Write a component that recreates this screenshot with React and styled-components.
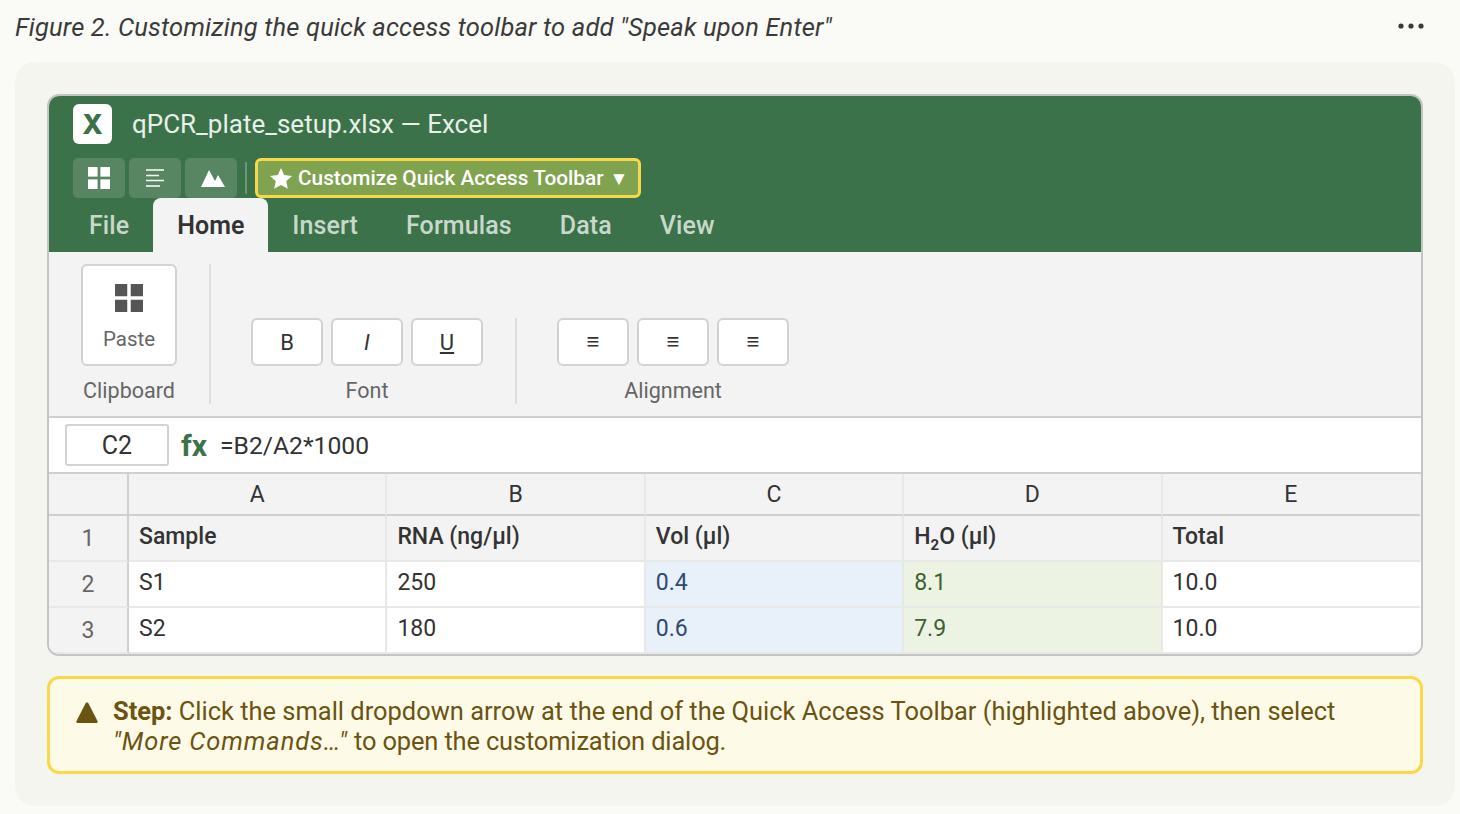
import React from "react";
import styled, { createGlobalStyle } from "styled-components";

const Global = createGlobalStyle`
  html, body {
    margin: 0;
    padding: 0;
    background: #fafaf7;
    font-family: "Roboto", "Liberation Sans", sans-serif;
    color: #333;
  }
  * { box-sizing: border-box; }
`;

const Page = styled.div`
  width: 1460px;
  height: 814px;
  overflow: hidden;
  padding: 0 5px 8px 15px;
`;

const Caption = styled.div`
  height: 62px;
  padding: 0 31px 8px 0;
  display: flex;
  align-items: center;
  justify-content: space-between;
`;

const CaptionText = styled.span`
  font-size: 25.5px;
  letter-spacing: 0.16px;
  font-style: italic;
  color: #3a3a3a;
`;

const MoreDots = styled.svg`
  width: 26px;
  height: 6px;
  margin-bottom: 2px;
  fill: #3a3a3a;
  display: block;
`;

const Card = styled.div`
  height: 744px;
  background: #f5f5f0;
  border-radius: 20px;
  padding: 32px;
  display: flex;
  flex-direction: column;
  gap: 20px;
`;

const Excel = styled.div`
  height: 562px;
  border: 2px solid #c4c4c2;
  border-radius: 12px;
  overflow: hidden;
  background: #fff;
`;

const Header = styled.div`
  height: 156px;
  background: #3c7249;
  padding: 8px 24px 0;
  display: flex;
  flex-direction: column;
`;

const TitleRow = styled.div`
  height: 40px;
  display: flex;
  align-items: center;
  gap: 20px;
`;

const Logo = styled.div`
  width: 39px;
  height: 40px;
  background: #fff;
  border-radius: 6px;
  display: flex;
  align-items: center;
  justify-content: center;
  color: #3c7249;
  font-family: "Inter", sans-serif;
  font-weight: 800;
  font-size: 27px;
`;

const Title = styled.span`
  color: #e9efe9;
  font-size: 26px;
`;

const QuickBar = styled.div`
  margin-top: 14px;
  height: 40px;
  display: flex;
  align-items: center;
  gap: 4px;
`;

const QuickButton = styled.div`
  width: 52px;
  height: 40px;
  border-radius: 5px;
  background: #598662;
  display: flex;
  align-items: center;
  justify-content: center;
`;

const MountainIcon = styled.svg`
  width: 24px;
  height: 17px;
  margin-left: 4px;
  fill: #fff;
`;

const QuickDivider = styled.div`
  width: 2px;
  height: 32px;
  margin: 0 4px 0 4px;
  background: #6d9878;
`;

const Highlight = styled.div`
  width: 386px;
  height: 40px;
  border: 3px solid #f7d84a;
  border-radius: 6px;
  background: #7fa34f;
  color: #fff;
  font-size: 20.8px;
  font-weight: 500;
  white-space: nowrap;
  display: flex;
  align-items: center;
  padding: 0 11px 0 12px;
  gap: 6px;
`;

const StarIcon = styled.svg`
  width: 22px;
  height: 21px;
  flex: none;
  fill: #fff;
`;

const Caret = styled.span`
  margin-left: auto;
  font-size: 19px;
`;

const Tabs = styled.div`
  margin-left: -8px;
  display: flex;
  height: 54px;
`;

const Tab = styled.div`
  padding: 0 24px;
  display: flex;
  align-items: center;
  font-size: 25px;
  letter-spacing: ${(p) => (p.$active ? "0" : "0.1px")};
  font-weight: ${(p) => (p.$active ? 600 : 500)};
  color: ${(p) => (p.$active ? "#333" : "#c9d8cc")};
  background: ${(p) => (p.$active ? "#f3f3f3" : "transparent")};
  border-radius: ${(p) => (p.$active ? "8px 8px 0 0" : "0")};
`;

const Ribbon = styled.div`
  height: 166px;
  background: #f3f3f3;
  border-bottom: 2px solid #cfcfcf;
  padding: 12px 0 12px 32px;
  display: flex;
  align-items: flex-end;
`;

const Group = styled.div`
  display: flex;
  flex-direction: column;
  align-items: center;
  gap: 12px;
`;

const GroupRow = styled.div`
  display: flex;
  gap: 8px;
`;

const GroupLabel = styled.div`
  height: 26px;
  line-height: 26px;
  font-size: 21.5px;
  color: #666;
`;

const Divider = styled.div`
  width: 2px;
  height: ${(p) => p.$height}px;
  background: #dedede;
  margin: 0 ${(p) => p.$right}px 0 ${(p) => p.$left}px;
`;

const PasteButton = styled.div`
  width: 96px;
  height: 102px;
  background: #fff;
  border: 2px solid #d2d2d2;
  border-radius: 6px;
  display: flex;
  flex-direction: column;
  align-items: center;
  padding-top: 18px;
  gap: 15px;
  font-size: 20.5px;
  color: #666;
`;

const FormatButton = styled.div`
  width: 72px;
  height: 48px;
  background: #fff;
  border: 2px solid #d2d2d2;
  border-radius: 6px;
  display: flex;
  align-items: center;
  justify-content: center;
  font-size: 22px;
  color: #333;
  font-style: ${(p) => (p.$italic ? "italic" : "normal")};
  text-decoration: ${(p) => (p.$underline ? "underline" : "none")};
`;

const FormulaBar = styled.div`
  height: 56px;
  background: #fff;
  border-bottom: 2px solid #cfcfcf;
  padding: 0 16px;
  display: flex;
  align-items: center;
`;

const NameBox = styled.div`
  width: 104px;
  height: 42px;
  border: 2px solid #d2d2d2;
  border-radius: 3px;
  display: flex;
  align-items: center;
  justify-content: center;
  font-size: 25px;
  color: #333;
`;

const Fx = styled.span`
  margin-left: 12px;
  font-size: 30px;
  font-weight: 700;
  color: #3c7249;
`;

const Formula = styled.span`
  margin-left: 13px;
  font-size: 24.7px;
  color: #333;
`;

const Sheet = styled.div`
  display: grid;
  grid-template-columns: 80px repeat(5, 1fr);
  grid-template-rows: 42px 46px 46px 46px;
`;

const Cell = styled.div`
  display: flex;
  align-items: center;
  padding: 0 10px 3px;
  font-size: 23px;
  color: ${(p) => p.$color || "#333"};
  background: ${(p) => p.$bg || "#fff"};
  border-right: 2px solid #e8e8e8;
  border-bottom: 2px solid #e8e8e8;
  &:nth-child(6n) { border-right-color: transparent; }
`;

const ColHead = styled(Cell)`
  justify-content: center;
  padding-bottom: 0;
  background: #f3f3f3;
  border-bottom-color: #cfcfcf;
`;

const RowHead = styled(Cell)`
  justify-content: center;
  padding-bottom: 0;
  padding-top: 1px;
  background: #f3f3f3;
  color: #666;
  border-right: 2px solid #cfcfcf;
`;

const Corner = styled(ColHead)`
  border-right: 2px solid #cfcfcf;
`;

const Title1 = styled(Cell)`
  background: #f3f3f3;
  font-weight: 500;
`;

const Sub = styled.sub`
  font-size: 15px;
  line-height: 0;
  font-weight: 700;
`;

const Callout = styled.div`
  height: 98px;
  background: #fefae8;
  border: 3px solid #f9d949;
  border-radius: 12px;
  padding: 2px 26px 0;
  display: flex;
  align-items: center;
  gap: 15px;
  color: #6b5310;
`;

const CalloutText = styled.div`
  font-size: 25.45px;
  line-height: 30px;
  strong { font-weight: 700; }
`;

const CalloutQuote = styled.em`
  font-style: italic;
  letter-spacing: 0.9px;
`;

const CalloutRest = styled.span`
  letter-spacing: -0.15px;
`;

const WarnIcon = styled.svg`
  width: 22px;
  height: 21px;
  flex: none;
  fill: #6b5310;
  margin-bottom: 27px;
`;

const Grid4 = ({ size, color }) => (
  <svg width={size} height={size} viewBox="0 0 24 24" fill={color}>
    <rect x="0" y="0" width="10.5" height="10.5" />
    <rect x="13.5" y="0" width="10.5" height="10.5" />
    <rect x="0" y="13.5" width="10.5" height="10.5" />
    <rect x="13.5" y="13.5" width="10.5" height="10.5" />
  </svg>
);

const columns = ["A", "B", "C", "D", "E"];
const rows = [
  ["2", "S1", "250", "0.4", "8.1", "10.0"],
  ["3", "S2", "180", "0.6", "7.9", "10.0"],
];

export default function App() {
  return (
    <Page>
      <Global />
      <Caption>
        <CaptionText>Figure 2. Customizing the quick access toolbar to add "Speak upon Enter"</CaptionText>
        <MoreDots viewBox="0 0 26 6">
          <circle cx="3" cy="3" r="2.6" />
          <circle cx="13" cy="3" r="2.6" />
          <circle cx="23" cy="3" r="2.6" />
        </MoreDots>
      </Caption>
      <Card>
        <Excel>
          <Header>
            <TitleRow>
              <Logo>X</Logo>
              <Title>qPCR_plate_setup.xlsx — Excel</Title>
            </TitleRow>
            <QuickBar>
              <QuickButton>
                <Grid4 size={22} color="#fff" />
              </QuickButton>
              <QuickButton>
                <svg width="20" height="20" viewBox="0 0 20 20" stroke="#fff" strokeWidth="1.6">
                  <path d="M1 2h18M1 7.500h13M1 12.500h18M1 18h14" />
                </svg>
              </QuickButton>
              <QuickButton>
                <MountainIcon viewBox="0 0 24 17">
                  <path d="M0 17 L8 0 L14 11 L17 5 L24 17 Z" />
                </MountainIcon>
              </QuickButton>
              <QuickDivider />
              <Highlight>
                <StarIcon viewBox="0 0 24 23">
                  <path d="M12 0l3.500 7.800 8.500.900-6.300 5.700 1.800 8.400L12 18.500l-7.500 4.300 1.800-8.400L0 8.700l8.500-.900z" />
                </StarIcon>
                Customize Quick Access Toolbar
                <Caret>▼</Caret>
              </Highlight>
            </QuickBar>
            <Tabs>
              <Tab>File</Tab>
              <Tab $active>Home</Tab>
              <Tab>Insert</Tab>
              <Tab>Formulas</Tab>
              <Tab>Data</Tab>
              <Tab>View</Tab>
            </Tabs>
          </Header>
          <Ribbon>
            <Group>
              <PasteButton>
                <Grid4 size={28} color="#555" />
                Paste
              </PasteButton>
              <GroupLabel>Clipboard</GroupLabel>
            </Group>
            <Divider $height={140} $left={32} $right={40} />
            <Group>
              <GroupRow>
                <FormatButton>B</FormatButton>
                <FormatButton $italic>I</FormatButton>
                <FormatButton $underline>U</FormatButton>
              </GroupRow>
              <GroupLabel>Font</GroupLabel>
            </Group>
            <Divider $height={86} $left={32} $right={40} />
            <Group>
              <GroupRow>
                <FormatButton>≡</FormatButton>
                <FormatButton>≡</FormatButton>
                <FormatButton>≡</FormatButton>
              </GroupRow>
              <GroupLabel>Alignment</GroupLabel>
            </Group>
          </Ribbon>
          <FormulaBar>
            <NameBox>C2</NameBox>
            <Fx>fx</Fx>
            <Formula>=B2/A2*1000</Formula>
          </FormulaBar>
          <Sheet>
            <Corner />
            {columns.map((c) => (
              <ColHead key={c}>{c}</ColHead>
            ))}
            <RowHead>1</RowHead>
            <Title1>Sample</Title1>
            <Title1>RNA (ng/μl)</Title1>
            <Title1>Vol (μl)</Title1>
            <Title1>
              <span>
                H<Sub>2</Sub>O (μl)
              </span>
            </Title1>
            <Title1>Total</Title1>
            {rows.map((r) => (
              <React.Fragment key={r[0]}>
                <RowHead>{r[0]}</RowHead>
                <Cell>{r[1]}</Cell>
                <Cell>{r[2]}</Cell>
                <Cell $bg="#e8f0fa" $color="#2f4a6d">{r[3]}</Cell>
                <Cell $bg="#ecf3e2" $color="#3f6030">{r[4]}</Cell>
                <Cell>{r[5]}</Cell>
              </React.Fragment>
            ))}
          </Sheet>
        </Excel>
        <Callout>
          <WarnIcon viewBox="0 0 22 21">
            <path d="M11 0.500 C12 0.500 12.500 1 13 2.500 L21.500 19 C22 20 21.500 21 20.500 21 H1.500 C0.500 21 0 20 0.500 19 L9 2.500 C9.500 1 10 0.500 11 0.500 Z" />
          </WarnIcon>
          <CalloutText>
            <strong>Step:</strong> Click the small dropdown arrow at the end of the Quick Access Toolbar (highlighted above), then select
            <br />
            <CalloutQuote>"More Commands…"</CalloutQuote>
            <CalloutRest> to open the customization dialog.</CalloutRest>
          </CalloutText>
        </Callout>
      </Card>
    </Page>
  );
}
